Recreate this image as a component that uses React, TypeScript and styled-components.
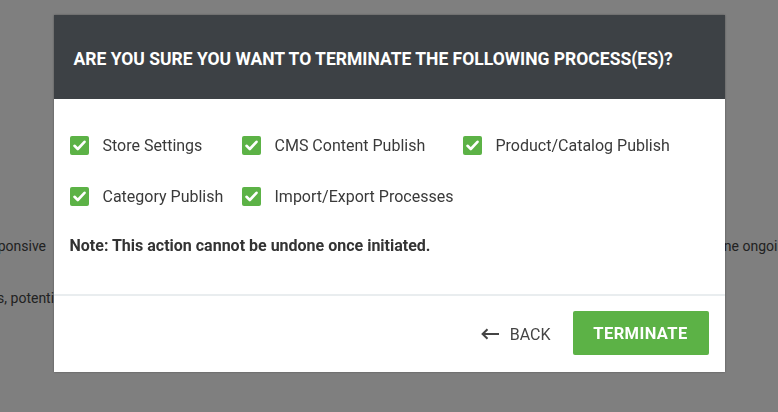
import React from "react";
import styled, { createGlobalStyle } from "styled-components";

const Global = createGlobalStyle`
  html, body { margin: 0; padding: 0; background: #fff; }
  body { font-family: Roboto, "Liberation Sans", sans-serif; overflow: hidden; }
`;

const Page = styled.div`
  width: 778px;
  height: 412px;
  overflow: hidden;
  padding-top: 236px;
  box-sizing: border-box;
  color: #444;
  font-size: 14px;
`;

const PageLine = styled.div`
  display: flex;
  justify-content: space-between;
  white-space: nowrap;
  height: 20px;
  line-height: 20px;
  margin-bottom: 32px;
`;

const Clip = styled.span<{ $left?: number; $right?: number }>`
  margin-left: ${(p) => p.$left ?? 0}px;
  margin-right: ${(p) => p.$right ?? 0}px;
`;

const Overlay = styled.div`
  position: fixed;
  inset: 0;
  background: rgba(0, 0, 0, 0.5);
  display: flex;
  justify-content: center;
  align-items: flex-start;
  padding-top: 15px;
`;

const Modal = styled.div`
  width: 671px;
  background: #fff;
  box-shadow: 0 0 2px rgba(0, 0, 0, 0.35);
  display: flex;
  flex-direction: column;
`;

const Header = styled.div`
  background: #3d4145;
  height: 84px;
  display: flex;
  align-items: center;
  padding: 0 20px;
  box-sizing: border-box;
`;

const Title = styled.h2`
  margin: 4px 0 0;
  color: #fff;
  font-family: Roboto, "Liberation Sans", sans-serif;
  font-weight: 700;
  font-size: 17.5px;
  letter-spacing: 0;
  text-transform: uppercase;
`;

const Body = styled.div`
  padding: 37px 16px 0;
  height: 197px;
  box-sizing: border-box;
  border-bottom: 2px solid #e9edef;
`;

const Grid = styled.div`
  display: grid;
  grid-template-columns: 172px 221px auto;
  row-gap: 33px;
`;

const Item = styled.label`
  display: flex;
  align-items: center;
  gap: 14px;
  color: #3a3a3a;
  font-size: 16px;
  height: 18px;
`;

const Box = styled.span`
  width: 19px;
  height: 19px;
  border-radius: 2px;
  background: #5cb246;
  display: flex;
  align-items: center;
  justify-content: center;
  flex-shrink: 0;
`;

const Note = styled.p`
  margin: 31px 0 0;
  font-size: 16px;
  line-height: 20px;
  font-weight: 700;
  color: #333;
`;

const Footer = styled.div`
  display: flex;
  justify-content: flex-end;
  align-items: center;
  padding: 15px 16px 17px;
  gap: 22px;
`;

const BackButton = styled.button`
  background: none;
  border: none;
  display: flex;
  align-items: center;
  gap: 10px;
  color: #444;
  font-family: Roboto, "Liberation Sans", sans-serif;
  font-size: 16px;
  text-transform: uppercase;
  padding: 0;
  margin-top: 2px;
`;

const PrimaryButton = styled.button`
  background: #5cb246;
  border: none;
  border-radius: 2px;
  width: 136px;
  height: 44px;
  color: #fff;
  font-family: Roboto, "Liberation Sans", sans-serif;
  font-weight: 700;
  font-size: 16.5px;
  letter-spacing: 0.4px;
  text-transform: uppercase;
`;

const Check = () => (
  <Box>
    <svg width="13" height="11" viewBox="0 0 13 11">
      <path d="M1.5 5.8 L4.8 9 L11.5 1.8" fill="none" stroke="#fff" strokeWidth="2.6" strokeLinecap="round" strokeLinejoin="round" />
    </svg>
  </Box>
);

const items = [
  "Store Settings",
  "CMS Content Publish",
  "Product/Catalog Publish",
  "Category Publish",
  "Import/Export Processes",
];

export default function App() {
  return (
    <>
      <Global />
      <Page>
        <PageLine>
          <Clip $left={-37}>unresponsive&nbsp;&nbsp; while the import is running. Terminating</Clip>
          <Clip $right={-15}>to stop one ongoing</Clip>
        </PageLine>
        <PageLine>
          <Clip $left={-60}>processes, potentially losing unsaved changes.</Clip>
        </PageLine>
      </Page>
      <Overlay>
        <Modal>
          <Header>
            <Title>Are you sure you want to terminate the following process(es)?</Title>
          </Header>
          <Body>
            <Grid>
              {items.map((t) => (
                <Item key={t}>
                  <Check />
                  {t}
                </Item>
              ))}
            </Grid>
            <Note>Note: This action cannot be undone once initiated.</Note>
          </Body>
          <Footer>
            <BackButton>
              <svg width="19" height="12" viewBox="0 0 19 12">
                <path d="M18 6 H2 M6.5 1.2 L1.6 6 L6.5 10.8" fill="none" stroke="#444" strokeWidth="2" />
              </svg>
              Back
            </BackButton>
            <PrimaryButton>Terminate</PrimaryButton>
          </Footer>
        </Modal>
      </Overlay>
    </>
  );
}
